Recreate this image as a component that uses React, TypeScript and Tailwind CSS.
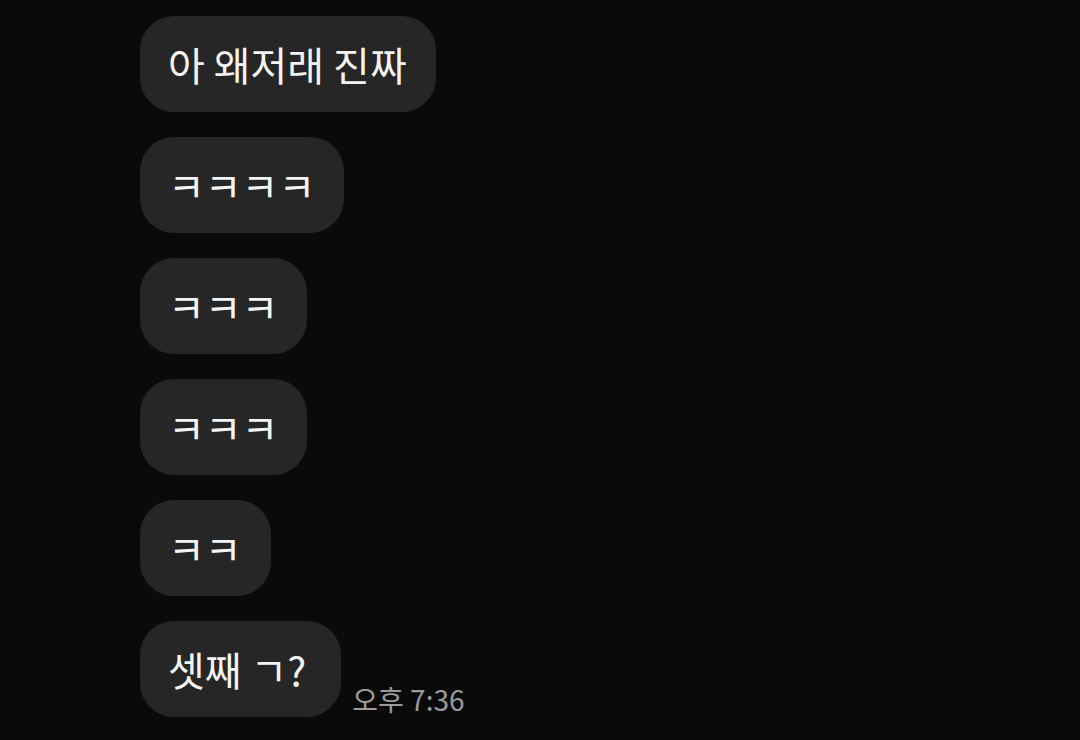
import React from "react";

const msgs = ["아 왜저래 진짜", "ㅋㅋㅋㅋ", "ㅋㅋㅋ", "ㅋㅋㅋ", "ㅋㅋ"];

export default function App() {
  const font = { fontFamily: '"Noto Sans CJK KR", "Noto Sans", sans-serif' };
  return (
    <div className="w-[1080px] h-[740px] bg-[#0a0a0a] overflow-hidden" style={font}>
      <div className="flex flex-col gap-[25px] pl-[140px] pt-[16px]">
        {msgs.map((m, i) => (
          <div key={i} className="flex">
            <div className="h-[96px] flex items-center pl-[28px] pr-[29px] rounded-[34px] bg-[#262626] text-[#f4f4f4] text-[40px] leading-none whitespace-nowrap">
              {m}
            </div>
          </div>
        ))}
        <div className="flex items-end gap-[11px]">
          <div className="h-[96px] flex items-center pl-[28px] pr-[35px] rounded-[34px] bg-[#262626] text-[#f4f4f4] text-[40px] leading-none whitespace-nowrap">
            셋째 ㄱ?
          </div>
          <div className="text-[28px] leading-none text-[#9b9b9b] pb-[4px] whitespace-nowrap">오후 7:36</div>
        </div>
      </div>
    </div>
  );
}
